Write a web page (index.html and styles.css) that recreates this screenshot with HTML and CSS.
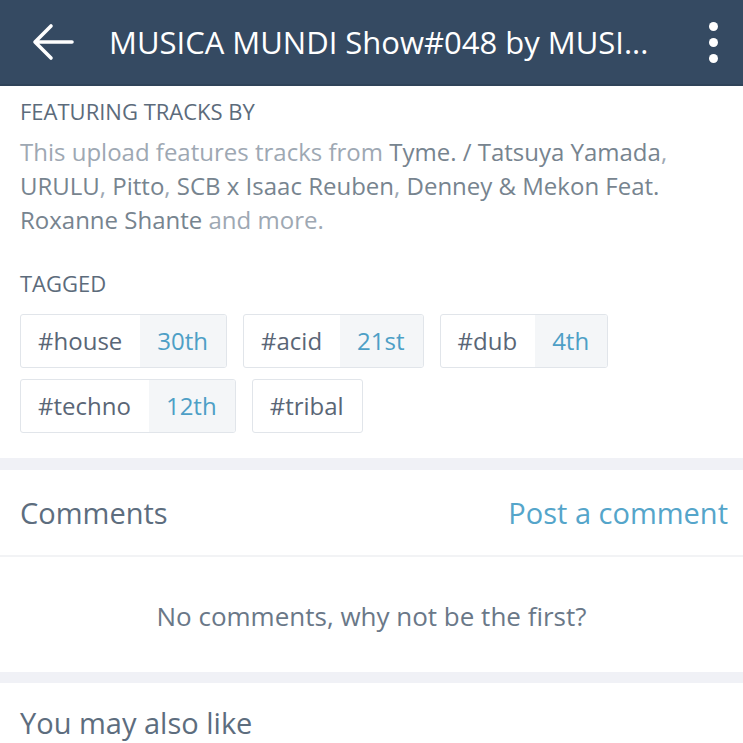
FILE: index.html
```html
<!DOCTYPE html>
<html lang="en">
<head>
  <meta charset="UTF-8" />
  <meta name="viewport" content="width=device-width, initial-scale=1.0"/>
  <title>MUSICA MUNDI Show#048</title>
  <link rel="stylesheet" href="styles.css">
</head>
<body>

<header class="topbar">
  <a class="back" href="#">
    <svg width="42" height="38" viewBox="0 0 42 38">
      <path d="M40 19H4M19 3L3 19l16 16" fill="none" stroke="#fff" stroke-width="3.6" stroke-linecap="round" stroke-linejoin="round"/>
    </svg>
  </a>
  <div class="title">MUSICA MUNDI Show#048 by MUSI...</div>
  <a class="more" href="#">
    <span></span><span></span><span></span>
  </a>
</header>

<section class="info">
  <h3>Featuring tracks by</h3>
  <p class="tracks">
    This upload features tracks from <b>Tyme. / Tatsuya Yamada</b>,
    <b>URULU</b>, <b>Pitto</b>, <b>SCB x Isaac Reuben</b>, <b>Denney &amp; Mekon Feat.</b>
    <b>Roxanne Shante</b> and more.
  </p>

  <h3 class="tagged">Tagged</h3>
  <div class="tags">
    <a class="tag" href="#"><span class="name">#house</span><span class="rank">30th</span></a>
    <a class="tag" href="#"><span class="name">#acid</span><span class="rank">21st</span></a>
    <a class="tag" href="#"><span class="name">#dub</span><span class="rank">4th</span></a>
    <a class="tag" href="#"><span class="name">#techno</span><span class="rank">12th</span></a>
    <a class="tag" href="#"><span class="name">#tribal</span></a>
  </div>
</section>

<section class="comments">
  <div class="comments-head">
    <h2>Comments</h2>
    <a href="#">Post a comment</a>
  </div>
  <p class="empty">No comments, why not be the first?</p>
</section>

<section class="related">
  <h2>You may also like</h2>
</section>

</body>
</html>
```

FILE: styles.css
```css
body { margin: 0; font-family: "Open Sans", "Noto Sans", sans-serif; background: #fff; color: #5c6b7b; }
a { text-decoration: none; }

.topbar {
  height: 84px; background: #354a62; border-bottom: 2px solid #2f4359;
  display: flex; align-items: center; color: #fff;
}
.back { display: flex; margin-left: 32px; width: 42px; }
.title { margin-left: 35px; font-size: 31px; flex: 1; white-space: nowrap; }
.more { display: flex; flex-direction: column; gap: 7px; width: 9px; margin-right: 25px; }
.more span { width: 9px; height: 9px; border-radius: 50%; background: #fff; }

.info { padding: 0 20px 25px; border-bottom: 12px solid #f0f1f6; }
.info h3 {
  margin: 0; padding-top: 12px; font-size: 22px; font-weight: 400; text-transform: uppercase;
  color: #5c6b7b; line-height: 26px;
}
.tracks { margin: 11px 0 0; font-size: 24px; line-height: 34px; color: #9ea8b3; }
.tracks b { font-weight: 400; color: #77848f; }
.info h3.tagged { padding-top: 33px; }

.tags { display: flex; flex-wrap: wrap; gap: 11px 16px; margin-top: 18px; }
.tag {
  display: flex; height: 52px; border: 1px solid #e1e5ea; border-radius: 3px;
  font-size: 24px; line-height: 52px; overflow: hidden;
}
.tag .name { padding: 0 18px 0 17px; color: #5a6676; }
.tag .rank { padding: 0 18px 0 17px; background: #f4f6f8; color: #4d9fc6; }

.comments { border-bottom: 11px solid #f0f1f6; }
.comments-head {
  display: flex; justify-content: space-between; align-items: center;
  height: 85px; padding: 0 15px 0 20px; border-bottom: 2px solid #f2f3f5;
}
.comments h2, .related h2 { margin: 0; font-size: 29px; font-weight: 400; color: #5d6d7e; line-height: 40px; }
.comments-head a { font-size: 29px; color: #55a5ca; }
.empty { margin: 0; padding-top: 3px; height: 112px; line-height: 112px; text-align: center; font-size: 26px; color: #6a7888; }

.related { padding: 20px 20px; }
```
